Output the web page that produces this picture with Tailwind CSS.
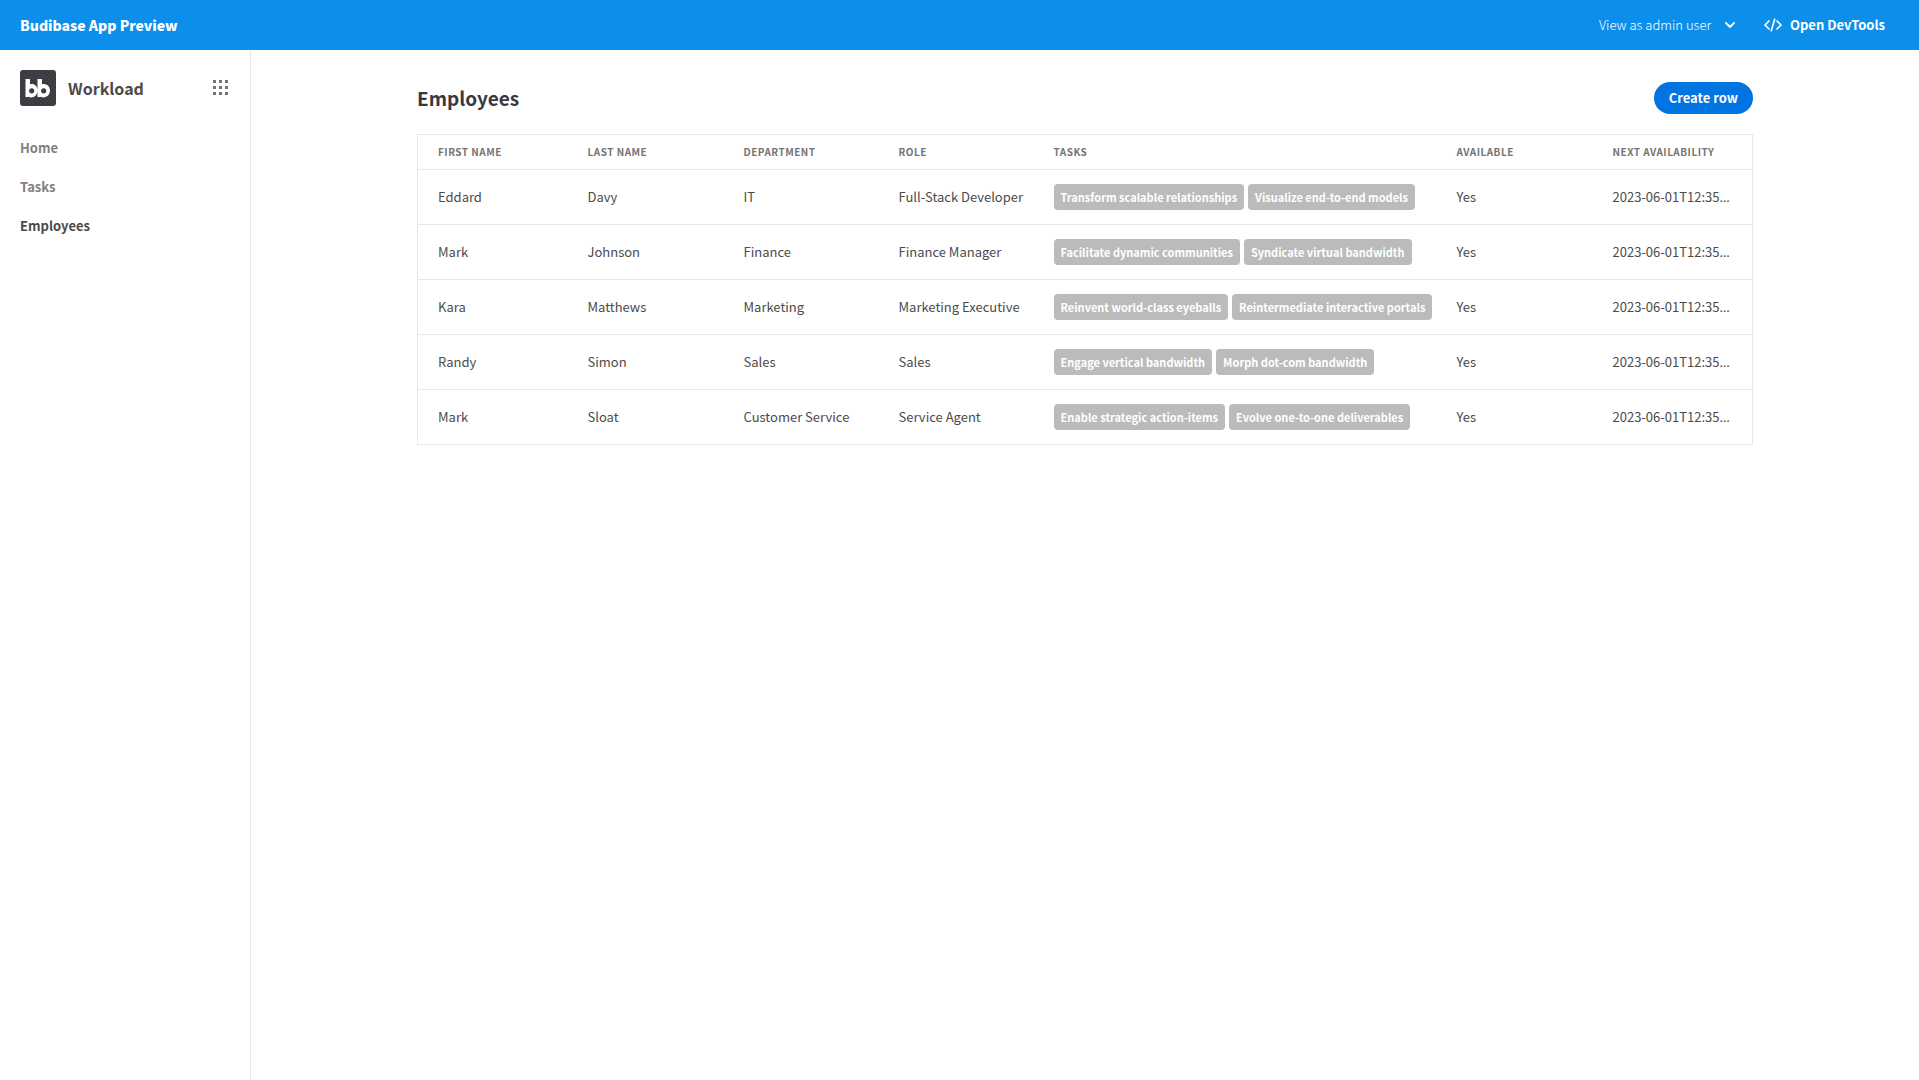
<!DOCTYPE html>
<html lang="en">
<head>
<meta charset="utf-8">
<title>Budibase App Preview</title>
<script src="https://cdn.jsdelivr.net/npm/@tailwindcss/browser@4"></script>
</head>
<body class="flex min-h-screen flex-col bg-white font-['Noto_Sans_CJK_SC','Noto_Sans',sans-serif] text-[13px] leading-5 text-[#4b4b4b]">
<header class="flex h-[50px] items-center justify-between bg-[#0b8feb] px-5 text-white">
  <span class="text-[14px] font-black">Budibase App Preview</span>
  <div class="flex items-center pr-[14px]">
    <div class="relative flex items-center">
      <select aria-label="View as" class="appearance-none bg-transparent pr-6 text-[13px] font-light text-white"><option>View as admin user</option></select>
      <svg class="pointer-events-none absolute right-0 h-3 w-3" viewBox="0 0 12 12" fill="none" stroke="currentColor" stroke-width="1.8" stroke-linecap="round" stroke-linejoin="round"><path d="M2 4l4 4 4-4"/></svg>
    </div>
    <button class="ml-7 flex items-center gap-2 pb-px text-[13px] font-bold">
      <svg class="h-[18px] w-[18px]" viewBox="0 0 18 18" fill="none" stroke="currentColor" stroke-width="1.7" stroke-linecap="round" stroke-linejoin="round"><path d="M5 5L1 9l4 4M13 5l4 4-4 4M10.7 3.3L7.3 14.7"/></svg>
      Open DevTools
    </button>
  </div>
</header>
<div class="flex flex-1">
  <aside class="w-[251px] shrink-0 border-r border-[#e6e6e6] px-5 pt-5">
    <div class="flex h-9 items-center">
      <svg class="h-9 w-9" viewBox="0 0 36 36" role="img" aria-label="Budibase">
        <defs><pattern id="dots" width="4" height="4" patternUnits="userSpaceOnUse"><rect width="4" height="4" fill="#39393f"/><circle cx="1" cy="1" r=".5" fill="#5d5d63"/><circle cx="3" cy="3" r=".5" fill="#5d5d63"/></pattern></defs>
        <rect width="36" height="36" rx="3" fill="url(#dots)"/>
        <path fill="#fff" fill-rule="evenodd" d="M5.500 9H10v5.200c4-1.200 7.600 1.800 7.600 6.200 0 4-3 7-6.300 7-1.200 0-2.200-.3-2.800-.9V27h-3zM11.700 18.200a2.600 2.600 0 100 5.200 2.600 2.600 0 000-5.200zM17.500 9H22v5.200c4-1.200 8 1.800 8 6.400 0 4-3 6.800-6.500 6.800-1.200 0-2.400-.3-3-.9V27h-3zM23.700 18.200a2.600 2.600 0 100 5.200 2.600 2.600 0 000-5.200z"/>
      </svg>
      <span class="ml-3 pb-px text-[16px] font-bold">Workload</span>
      <button class="ml-auto pb-px" aria-label="Apps">
        <svg class="mr-[2px] h-[15px] w-[15px]" viewBox="0 0 15 15" fill="#747474"><path d="M0 0h3v3H0zM6 0h3v3H6zM12 0h3v3h-3zM0 6h3v3H0zM6 6h3v3H6zM12 6h3v3h-3zM0 12h3v3H0zM6 12h3v3H6zM12 12h3v3h-3z"/></svg>
      </button>
    </div>
    <nav class="mt-8 flex flex-col gap-[19px] text-[13px] font-bold text-[#808080]">
      <a href="#">Home</a>
      <a href="#">Tasks</a>
      <a href="#" class="text-[#4b4b4b]">Employees</a>
    </nav>
  </aside>
  <main class="mx-auto w-full max-w-[1400px] px-8 pt-8">
    <div class="flex h-8 items-center justify-between">
      <h1 class="text-[19px] font-bold text-[#38383e]">Employees</h1>
      <button class="h-8 rounded-full bg-[#0074e0] px-[15px] text-[13px] font-bold text-white">Create row</button>
    </div>
    <table class="mt-5 w-full table-fixed border-collapse border border-[#e8e8e8] text-left">
      <colgroup><col class="w-[160px]"><col class="w-[156px]"><col class="w-[155px]"><col class="w-[155px]"><col><col class="w-[156px]"><col class="w-[150px]"></colgroup>
      <thead class="text-[10px] tracking-wider text-[#747474] uppercase">
        <tr class="h-[35px] border-b border-[#e8e8e8]"><th class="pl-5 font-bold">First name</th><th class="px-[10px] font-bold">Last name</th><th class="px-[10px] font-bold">Department</th><th class="px-[10px] font-bold">Role</th><th class="px-[10px] font-bold">Tasks</th><th class="px-[10px] font-bold">Available</th><th class="pl-[10px] font-bold whitespace-nowrap">Next availability</th></tr>
      </thead>
      <tbody id="rows"></tbody>
    </table>
  </main>
</div>
<script>
const employees = [
  ["Eddard", "Davy", "IT", "Full-Stack Developer", ["Transform scalable relationships", "Visualize end-to-end models"]],
  ["Mark", "Johnson", "Finance", "Finance Manager", ["Facilitate dynamic communities", "Syndicate virtual bandwidth"]],
  ["Kara", "Matthews", "Marketing", "Marketing Executive", ["Reinvent world-class eyeballs", "Reintermediate interactive portals"]],
  ["Randy", "Simon", "Sales", "Sales", ["Engage vertical bandwidth", "Morph dot-com bandwidth"]],
  ["Mark", "Sloat", "Customer Service", "Service Agent", ["Enable strategic action-items", "Evolve one-to-one deliverables"]]
];
document.getElementById("rows").innerHTML = employees.map(([first, last, dept, role, tasks]) => `
  <tr class="h-[55px] border-b border-[#e8e8e8]">
    <td class="truncate pl-5">${first}</td>
    <td class="truncate px-[10px]">${last}</td>
    <td class="truncate px-[10px]">${dept}</td>
    <td class="truncate px-[10px]">${role}</td>
    <td class="px-[10px]"><div class="flex gap-1">${tasks.map(t => `<span class="h-[26px] rounded-[4px] bg-[#bbbbbb] px-[7px] text-[11px] leading-[26px] font-bold whitespace-nowrap text-white">${t}</span>`).join("")}</div></td>
    <td class="truncate px-[10px]">Yes</td>
    <td class="pl-[10px] whitespace-nowrap">2023-06-01T12:35<span class="font-['Noto_Sans',sans-serif]">…</span></td>
  </tr>`).join("");
</script>
</body>
</html>
